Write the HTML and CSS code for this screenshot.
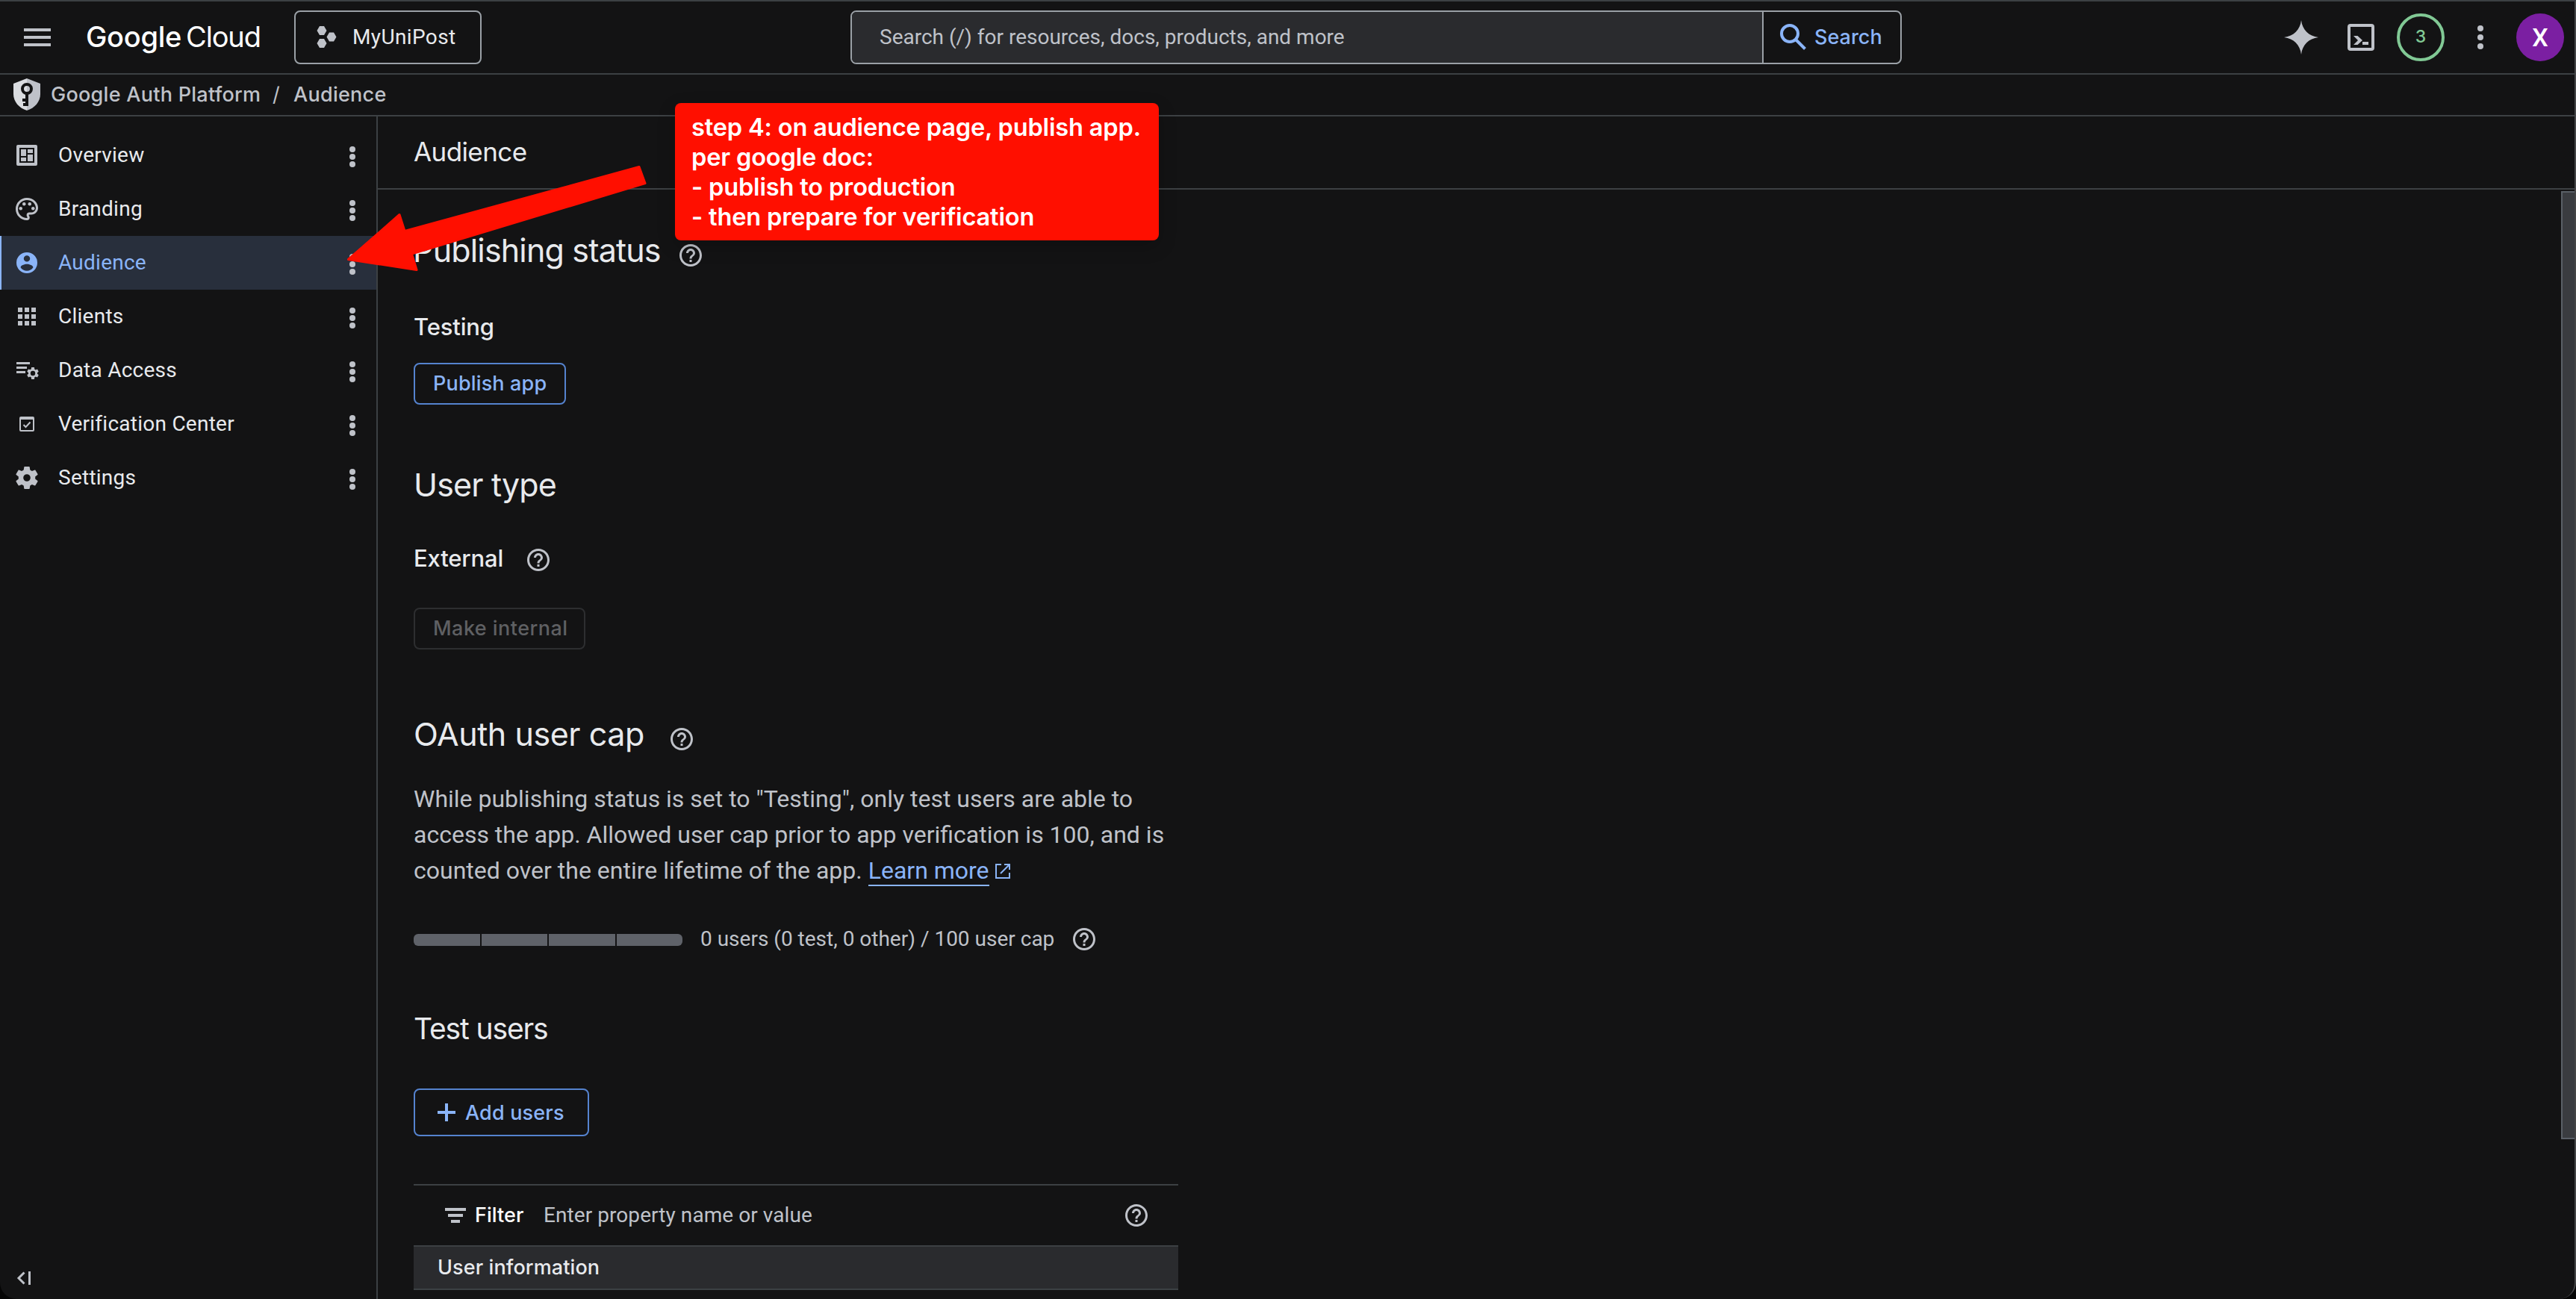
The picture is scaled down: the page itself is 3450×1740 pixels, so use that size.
FILE: index.html
```html
<!DOCTYPE html>
<html lang="en">
<head>
<meta charset="utf-8">
<title>Audience – Google Auth Platform</title>
<link rel="stylesheet" href="styles.css">
</head>
<body>
<svg class="defs" aria-hidden="true">
  <symbol id="help" viewBox="0 0 24 24"><path d="M11 18h2v-2h-2v2zm1-16C6.48 2 2 6.48 2 12s4.480 10 10 10 10-4.480 10-10S17.520 2 12 2zm0 18c-4.410 0-8-3.590-8-8s3.590-8 8-8 8 3.590 8 8-3.590 8-8 8zm0-14c-2.210 0-4 1.790-4 4h2c0-1.100.9-2 2-2s2 .9 2 2c0 2-3 1.750-3 5h2c0-2.250 3-2.500 3-5 0-2.210-1.790-4-4-4z"/></symbol>
  <symbol id="more" viewBox="0 0 8 28"><circle cx="4" cy="4" r="4"/><circle cx="4" cy="14" r="4"/><circle cx="4" cy="24" r="4"/></symbol>
  <symbol id="gear" viewBox="0 0 24 24"><path fill-rule="evenodd" d="M19.430 12.980c.040-.320.070-.640.070-.980s-.030-.660-.070-.980l2.110-1.650c.190-.150.240-.420.120-.640l-2-3.460c-.120-.220-.390-.300-.610-.220l-2.490 1c-.520-.400-1.080-.730-1.690-.980l-.380-2.650C14.460 2.180 14.250 2 14 2h-4c-.250 0-.460.180-.490.420l-.380 2.650c-.610.250-1.170.590-1.690.980l-2.490-1c-.230-.090-.490 0-.610.220l-2 3.460c-.130.220-.070.490.120.640l2.110 1.650c-.040.320-.070.650-.070.980s.030.660.070.980l-2.110 1.650c-.190.150-.240.420-.120.640l2 3.460c.120.220.390.300.610.220l2.490-1c.520.400 1.080.730 1.690.980l.380 2.650c.030.240.240.420.490.420h4c.250 0 .460-.180.490-.420l.380-2.650c.610-.250 1.170-.590 1.690-.980l2.490 1c.230.090.490 0 .610-.220l2-3.460c.120-.220.070-.490-.120-.640l-2.110-1.650zM12 15.200a3.200 3.200 0 1 1 0-6.400 3.200 3.200 0 0 1 0 6.400z"/></symbol>
</svg>

<div class="window">
  <header class="topbar">
    <svg class="menu" viewBox="0 0 36 24"><path d="M0 0h36v4H0zM0 10h36v4H0zM0 20h36v4H0z"/></svg>
    <div class="logo"><span class="logo-google">Google</span><span class="logo-cloud">Cloud</span></div>
    <div class="project">
      <svg class="project-icon" viewBox="0 0 28 30"><path d="M4 0h6l3.500 6-3.500 6H4L.5 6zM4 17h6l3.500 6-3.500 6H4L.5 23zM17 8.500h6l3.500 6-3.500 6h-6l-3.500-6z"/></svg>
      <span>MyUniPost</span>
    </div>
    <div class="search">
      <div class="search-input">Search (/) for resources, docs, products, and more</div>
      <div class="search-button">
        <svg class="search-icon" viewBox="0 0 36 36"><circle cx="13" cy="13" r="11"/><path d="M21 21l12.500 12.500"/></svg>
        <span>Search</span>
      </div>
    </div>
    <div class="tools">
      <svg class="spark" viewBox="0 0 46 46"><path d="M23 0C24.500 13 33 21.500 46 23 33 24.500 24.500 33 23 46 21.500 33 13 24.500 0 23 13 21.500 21.500 13 23 0z"/></svg>
      <svg class="terminal" viewBox="0 0 36 36"><rect x="2" y="2" width="32" height="32" rx="2"/><path class="solid" d="M8 16h5.500l6.500 6-6.500 6H8l6-6zM20 24h8v4h-8z"/></svg>
      <div class="count">3</div>
      <svg class="kebab" viewBox="0 0 8 32"><circle cx="4" cy="4" r="4"/><circle cx="4" cy="16" r="4"/><circle cx="4" cy="28" r="4"/></svg>
      <div class="avatar">X</div>
    </div>
  </header>

  <nav class="crumbs">
    <svg class="shield" viewBox="0 0 36 43"><path class="shield-l" d="M18 0L0 7v14c0 10 7.500 19 18 22z"/><path class="shield-r" d="M18 0l18 7v14c0 10-7.500 19-18 22z"/><circle class="key" cx="18" cy="14" r="6"/><path class="key" d="M18 20v17M18 29h-6M18 35h-5"/></svg>
    <span class="crumb-root">Google Auth Platform</span><span class="slash">/</span><span>Audience</span>
  </nav>

  <div class="body">
    <aside class="side">
      <ul class="nav">
        <li><svg class="ico" viewBox="0 0 36 36"><path fill-rule="evenodd" d="M6 4h24a2 2 0 0 1 2 2v24a2 2 0 0 1-2 2H6a2 2 0 0 1-2-2V6a2 2 0 0 1 2-2zm2 4v20h20V8z"/><path d="M10 10h7v9h-7zM19 10h7v5h-7zM19 17h7v9h-7zM10 21h7v5h-7z"/></svg><span>Overview</span><svg class="dots"><use href="#more"/></svg></li>
        <li><svg class="ico" viewBox="0 0 24 24"><path d="M12 22C6.490 22 2 17.510 2 12S6.490 2 12 2s10 4.040 10 9c0 3.310-2.690 6-6 6h-1.770c-.280 0-.500.220-.500.500 0 .120.050.230.130.330.410.470.640 1.060.640 1.670A2.500 2.500 0 0 1 12 22zm0-18c-4.410 0-8 3.590-8 8s3.590 8 8 8c.280 0 .500-.220.500-.500a.54.54 0 0 0-.140-.350c-.410-.460-.630-1.050-.630-1.650a2.500 2.500 0 0 1 2.500-2.500H16c2.210 0 4-1.790 4-4 0-3.860-3.590-7-8-7z"/><circle cx="6.500" cy="11.500" r="1.500"/><circle cx="9.500" cy="7.500" r="1.500"/><circle cx="14.500" cy="7.500" r="1.500"/><circle cx="17.500" cy="11.500" r="1.500"/></svg><span>Branding</span><svg class="dots"><use href="#more"/></svg></li>
        <li class="on"><svg class="ico" viewBox="0 0 36 36"><path fill-rule="evenodd" d="M18 4a14 14 0 1 1 0 28 14 14 0 0 1 0-28zm0 4.200a4.200 4.200 0 1 0 0 8.400 4.200 4.200 0 0 0 0-8.400zm0 11.600c-3 0-8.400 1.600-8.400 4.400a10 10 0 0 0 16.800 0c0-2.800-5.400-4.400-8.400-4.400z"/></svg><span>Audience</span><svg class="dots"><use href="#more"/></svg></li>
        <li><svg class="ico" viewBox="0 0 36 36"><path d="M6 6h6v6H6zM15 6h6v6h-6zM24 6h6v6h-6zM6 15h6v6H6zM15 15h6v6h-6zM24 15h6v6h-6zM6 24h6v6H6zM15 24h6v6h-6zM24 24h6v6h-6z"/></svg><span>Clients</span><svg class="dots"><use href="#more"/></svg></li>
        <li><svg class="ico" viewBox="0 0 36 36"><path d="M4 7h18v3H4zM4 13h14v3H4zM4 19h12v3H4z"/><svg x="16.400" y="12.400" width="19.200" height="19.200" viewBox="0 0 24 24"><path fill-rule="evenodd" d="M19.430 12.980c.1-.65.1-1.300 0-1.960l2.230-1.750-2.120-4-2.980 1.100c-.5-.4-1.080-.73-1.690-.98L14.400 2H9.600l-.470 3.070c-.610.250-1.170.590-1.690.980l-2.980-1-2.120 4 2.230 1.970c-.1.650-.1 1.300 0 1.960l-2.230 1.750 2.120 4 2.980-1c.520.400 1.080.730 1.690.980L9.600 22h4.800l.470-3.290c.610-.250 1.170-.590 1.690-.980l2.980 1 2.120-4zM12 16a4 4 0 1 1 0-8 4 4 0 0 1 0 8z"/></svg></svg><span>Data Access</span><svg class="dots"><use href="#more"/></svg></li>
        <li><svg class="ico" viewBox="0 0 36 36"><path fill-rule="evenodd" d="M10 8h16a2 2 0 0 1 2 2v16a2 2 0 0 1-2 2H10a2 2 0 0 1-2-2V10a2 2 0 0 1 2-2zm0 4v14h16V12z"/><path class="tick" d="M13.500 19l3 3 6-6.500"/></svg><span>Verification Center</span><svg class="dots"><use href="#more"/></svg></li>
        <li><svg class="ico"><use href="#gear"/></svg><span>Settings</span><svg class="dots"><use href="#more"/></svg></li>
      </ul>
      <svg class="collapse" viewBox="0 0 20 18"><path d="M10.500 1.500L3 9l7.500 7.500M17.500 0v18"/></svg>
    </aside>

    <main class="main">
      <div class="title">Audience</div>
      <div class="scroll">
        <div class="content">
          <h2 class="h-status">Publishing status<svg class="help low"><use href="#help"/></svg></h2>
          <h3 class="h-testing">Testing</h3>
          <button class="btn btn-publish">Publish app</button>

          <h2 class="h-type">User type</h2>
          <h3 class="h-external">External<svg class="help"><use href="#help"/></svg></h3>
          <button class="btn btn-off">Make internal</button>

          <h2 class="h-cap">OAuth user cap<svg class="help low"><use href="#help"/></svg></h2>
          <p class="note">While publishing status is set to "Testing", only test users are able to<br>access the app. Allowed user cap prior to app verification is 100, and is<br>counted over the entire lifetime of the app. <a class="link">Learn more</a><svg class="ext" viewBox="0 0 20 20"><path d="M8 1H1v18h18v-7M12 1h7v7M18.500 1.500L7 13"/></svg></p>
          <div class="usage">
            <div class="meter"><i></i><i></i><i></i><i></i></div>
            <span>0 users (0 test, 0 other) / 100 user cap</span>
            <svg class="help"><use href="#help"/></svg>
          </div>

          <h2 class="h-users">Test users</h2>
          <button class="btn btn-add"><svg class="plus" viewBox="0 0 24 24"><path d="M10 0h4v10h10v4H14v10h-4V14H0v-4h10z"/></svg>Add users</button>

          <section class="table">
            <div class="filter">
              <svg class="funnel" viewBox="0 0 28 20"><path d="M0 0h28v4H0zM4 8h20v4H4zM8 16h12v4H8z"/></svg>
              <b>Filter</b><span>Enter property name or value</span>
              <svg class="help"><use href="#help"/></svg>
            </div>
            <div class="thead">User information</div>
          </section>
        </div>
        <div class="scrollbar"></div>
      </div>
    </main>
  </div>

  <svg class="arrow" viewBox="460 215 410 155"><path d="M466.500 347.500L535 287.500 542 309.500 856 223.500 864 245.500 551.500 340 558 361.500z"/></svg>
  <div class="callout">step 4: on audience page, publish app.<br>per google doc:<br>- publish to production<br>- then prepare for verification</div>
</div>
</body>
</html>
```
FILE: styles.css
```css
* { box-sizing: border-box; margin: 0; padding: 0; }
html, body { width: 3450px; height: 1740px; overflow: hidden; background: #050505; }
body { font-family: Roboto, sans-serif; font-size: 28px; color: #e8eaed; }
svg { display: block; flex: none; fill: #bfc2c9; }
.defs { position: absolute; width: 0; height: 0; }
button { font: inherit; background: none; }

.window {
  position: relative; width: 3450px; height: 1740px; overflow: hidden;
  display: flex; flex-direction: column;
  background: #131314; border-top: 2px solid #3c4043; border-right: 2px solid #444546;
  border-radius: 0 0 22px 22px;
}

/* Top bar */
.topbar { height: 98px; flex: none; display: flex; align-items: center; border-bottom: 2px solid #3c4043; padding-left: 32px; }
.menu { width: 36px; height: 24px; }
.logo { font-family: Inter, sans-serif; font-size: 38px; color: #fff; display: flex; width: 278px; margin-left: 47px; padding-bottom: 3px; }
.logo-google { font-weight: 500; letter-spacing: -.29px; width: 134px; }
.logo-cloud { letter-spacing: -1.13px; }
.project { width: 251px; height: 72px; margin-left: 1px; border: 2px solid #9aa0a6; border-radius: 8px; display: flex; align-items: center; padding: 0 0 1px 28px; letter-spacing: .37px; }
.project-icon { width: 28px; height: 30px; margin-right: 20px; }
.search { width: 1408px; height: 72px; margin-left: 494px; display: flex; border: 2px solid #9aa0a6; border-radius: 8px; overflow: hidden; }
.search-input { width: 1221px; flex: none; background: #2a2b2e; border-right: 2px solid #9aa0a6; padding-left: 37px; line-height: 67px; color: #bfc2c9; }
.search-button { display: flex; align-items: center; padding: 0 0 1px 22px; color: #8ab4f8; font: 500 27px Inter, sans-serif; }
.search-icon { width: 36px; height: 36px; margin-right: 10px; fill: none; stroke: #8ab4f8; stroke-width: 4; }
.tools { display: flex; align-items: center; margin-left: auto; padding-right: 14px; }
.spark { width: 46px; height: 46px; margin-right: 39px; }
.terminal { width: 36px; height: 36px; margin-right: 30px; fill: none; stroke: #bfc2c9; stroke-width: 4; }
.terminal .solid { fill: #bfc2c9; stroke: none; }
.count { width: 64px; height: 64px; border: 4px solid #81c995; border-radius: 50%; color: #81c995; font: 500 23px/55px Inter, sans-serif; text-align: center; }
.kebab { width: 8px; height: 32px; margin: 0 44px; }
.avatar { width: 64px; height: 64px; border-radius: 50%; background: #7b1fa2; color: #fff; font-size: 34px; font-weight: 500; line-height: 65px; text-align: center; }

/* Breadcrumbs */
.crumbs { height: 56px; flex: none; display: flex; align-items: center; padding: 0 0 1px 18px; border-bottom: 2px solid #3c4043; font: 500 27px Inter, sans-serif; color: #bfc2c9; letter-spacing: .27px; }
.shield { width: 36px; height: 43px; margin-right: 14px; }
.shield-l { fill: #dadce0; }
.shield-r { fill: #bfc2c9; }
.key { fill: none; stroke: #131314; stroke-width: 4; }
.crumb-root { width: 297px; }
.slash { width: 28px; font-weight: 400; }

.body { flex: 1; display: flex; min-height: 0; }

/* Sidebar */
.side { width: 506px; flex: none; border-right: 2px solid #3c4043; padding-top: 16px; display: flex; flex-direction: column; }
.nav { list-style: none; }
.nav li { height: 72px; display: flex; align-items: center; padding-left: 18px; letter-spacing: .25px; }
.nav li span { padding-bottom: 2px; }
.nav .on { background: #282f3c; color: #8ab4f8; border-left: 2px solid #8ab4f8; padding-left: 16px; }
.nav .on .ico { fill: #8ab4f8; }
.ico { width: 36px; height: 36px; margin-right: 24px; }
.ico .tick { fill: none; stroke: #bfc2c9; stroke-width: 2; }
.dots { width: 8px; height: 28px; margin: 4px 28px 0 auto; }
.collapse { width: 20px; height: 18px; margin: auto 0 19px 22px; fill: none; stroke: #bfc2c9; stroke-width: 3; }

/* Main column */
.main { flex: 1; display: flex; flex-direction: column; min-width: 0; }
.title { height: 98px; flex: none; border-bottom: 2px solid #3c4043; padding-left: 48px; font: 400 35px/95px Inter, sans-serif; letter-spacing: -.6px; }
.scroll { flex: 1; display: flex; min-height: 0; }
.content { width: 1072px; flex: none; padding: 51px 0 0 48px; }
h2, h3 { display: flex; align-items: center; font-family: Inter, sans-serif; }
h2 { font-size: 43px; font-weight: 400; line-height: 60px; height: 60px; letter-spacing: -.83px; }
h3 { font-size: 31px; font-weight: 500; line-height: 40px; height: 40px; letter-spacing: -.15px; }
.help { width: 36px; height: 36px; }
.h-status { text-indent: -1px; }
.h-status .help { margin: 14px 0 0 22px; }
.h-testing { margin-top: 53px; }
.h-type { margin-top: 77px; }
.h-external { margin-top: 49px; }
.h-external .help { margin: 4px 0 0 29px; }
.h-cap { margin-top: 83px; letter-spacing: -.44px; }
.h-cap .help { margin: 14px 0 0 32px; }
.h-users { margin-top: 73px; font-size: 39px; line-height: 56px; height: 56px; letter-spacing: -1.130px; }

.btn { display: flex; align-items: center; height: 56px; border: 2px solid #5583cf; border-radius: 8px; color: #8ab4f8; font: 500 27px Inter, sans-serif; padding: 0 0 1px 24px; letter-spacing: .16px; }
.btn-publish { width: 204px; margin-top: 28px; }
.btn-off { width: 230px; margin-top: 46px; border-color: #2d2e30; color: #5f6063; letter-spacing: .46px; }
.btn-add { width: 235px; height: 64px; margin-top: 52px; padding: 0 0 0 30px; }
.plus { width: 24px; height: 24px; margin-right: 13px; fill: #8ab4f8; }

.note { margin-top: 33px; font-size: 32px; line-height: 48px; color: #bfc2c9; white-space: nowrap; }
.link { color: #8ab4f8; display: inline-block; line-height: 38px; border-bottom: 2px solid #8ab4f8; }
.ext { display: inline-block; width: 20px; height: 20px; margin-left: 8px; fill: none; stroke: #8ab4f8; stroke-width: 2; }
.usage { margin-top: 51px; height: 36px; display: flex; align-items: center; color: #bfc2c9; }
.usage span { padding-bottom: 3px; }
.meter { width: 360px; height: 16px; margin: 0 24px 0 0; display: flex; gap: 2px; border-radius: 6px; overflow: hidden; }
.meter i { flex: 1; background: #5f6269; }
.usage .help { margin: -2px 0 0 22px; }

.table { margin-top: 64px; width: 1024px; border-top: 2px solid #3c4043; }
.filter { height: 80px; display: flex; align-items: center; padding: 0 38px 0 42px; color: #bfc2c9; letter-spacing: .07px; }
.filter b { width: 92px; margin-left: 12px; padding-bottom: 1px; font: 500 27px Inter, sans-serif; color: #fff; }
.filter span { padding-bottom: 1px; }
.funnel { width: 28px; height: 20px; }
.filter .help { margin-left: auto; }
.thead { height: 60px; background: #2a2b2e; border: solid #3c4043; border-width: 2px 0; padding-left: 32px; font: 500 27px/55px Inter, sans-serif; letter-spacing: .1px; }

.scrollbar { width: 18px; height: 1270px; margin: 2px 0 0 auto; background: #3a3c40; border: 2px solid #5a6067; border-right: 0; }

/* Annotation layer over the page */
.arrow { position: absolute; left: 460px; top: 213px; width: 410px; height: 155px; fill: #ff0f00; stroke: #ff0f00; stroke-width: 3; stroke-linejoin: round; }
.callout { position: absolute; left: 904px; top: 136px; width: 648px; height: 184px; padding: 12px 22px; border-radius: 8px; background: #ff0f00; color: #fff; font: 600 32.600px/40px Inter, sans-serif; letter-spacing: -.18px; white-space: nowrap; box-shadow: 0 8px 24px rgba(0, 0, 0, .2); }
```
